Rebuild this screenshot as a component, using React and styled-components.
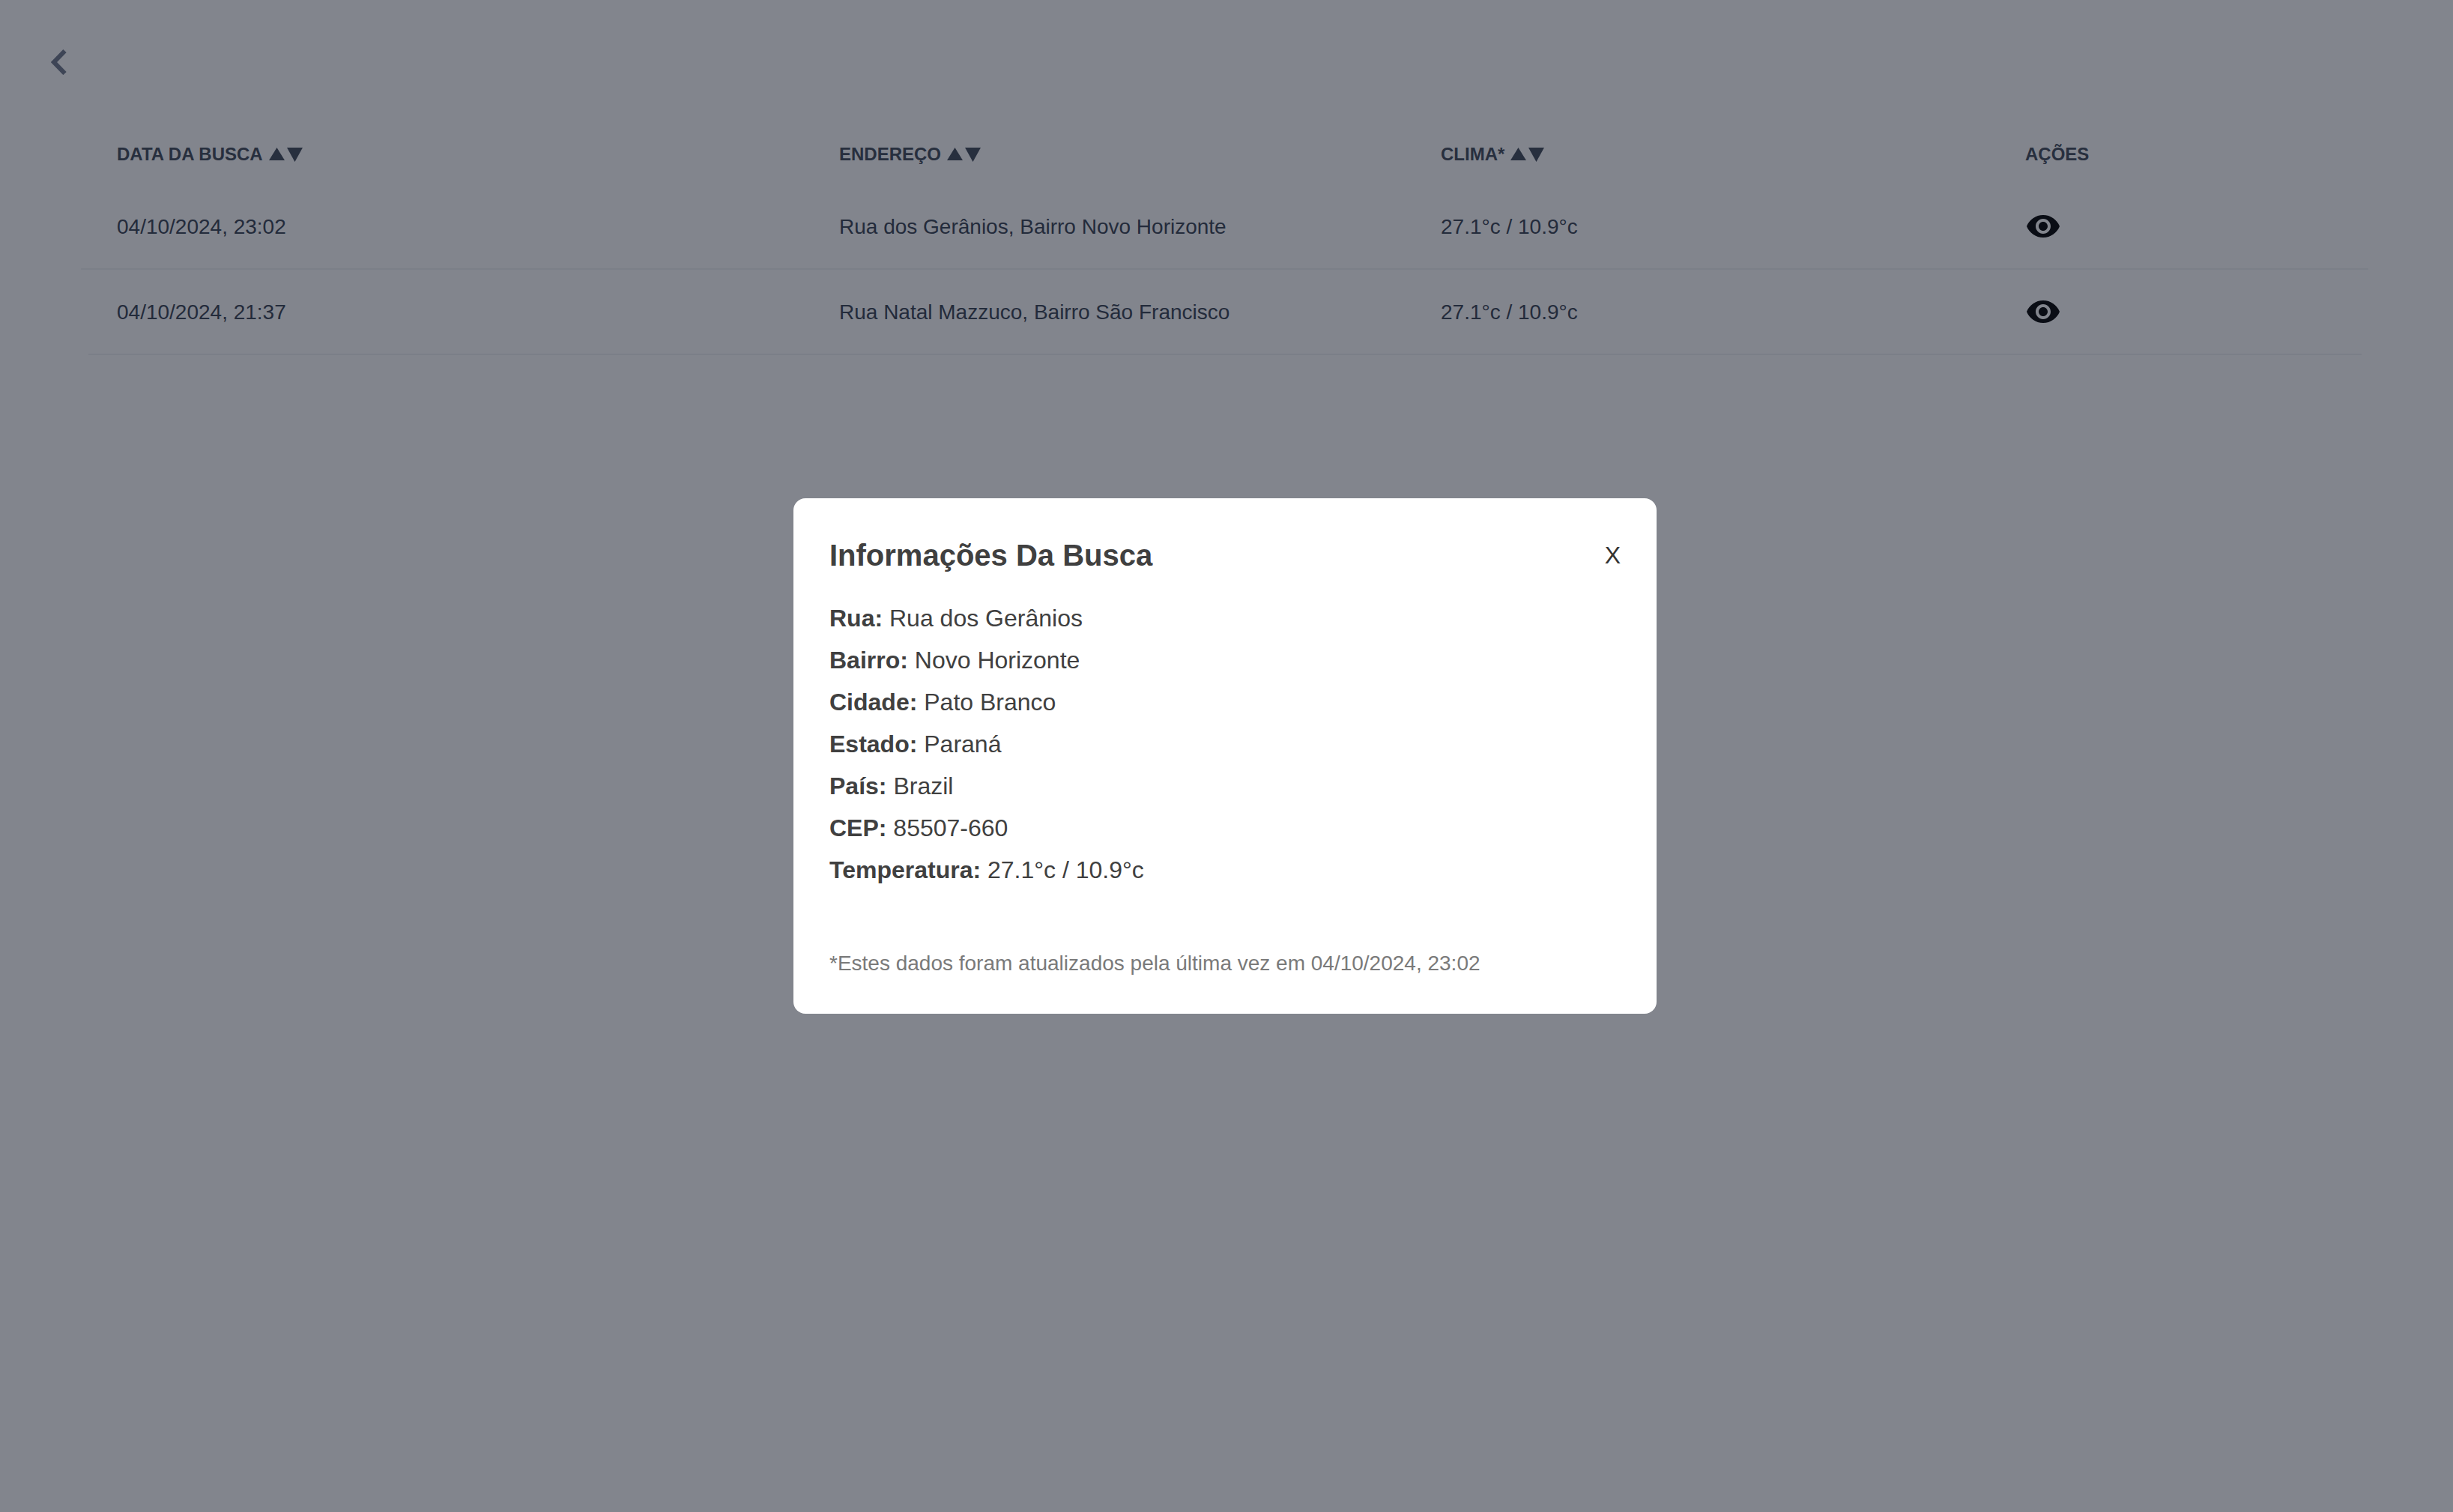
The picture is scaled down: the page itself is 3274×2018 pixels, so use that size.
import React from "react";
import styled, { createGlobalStyle } from "styled-components";
import { MdVisibility } from "react-icons/md";

const Global = createGlobalStyle`
  html, body { margin: 0; padding: 0; background: #fff; }
  body { font-family: "Liberation Sans", Arial, sans-serif; color: #404040; }
`;

const Page = styled.div`
  width: 100%;
  height: 2018px;
  overflow: hidden;
  box-sizing: border-box;
  padding: 66px 113px 0 68px;
`;

const BackButton = styled.button`
  display: block;
  width: 21px;
  height: 34px;
  padding: 0;
  border: 0;
  background: none;
  color: #6f788a;
`;

const Table = styled.div`
  margin: 64px 0 0 40px;
`;

const Row = styled.div`
  display: grid;
  grid-template-columns: 964px 803px 780px 1fr;
  align-items: center;
  box-sizing: border-box;
  padding: 2px 0 0 ${(p) => (p.$last ? 38 : 48)}px;
  margin-left: ${(p) => (p.$last ? 10 : 0)}px;
  margin-right: ${(p) => (p.$last ? 9 : 0)}px;
  height: 114px;
  border-bottom: 2px solid #f1f2f4;
  font-size: 28px;
  color: #374151;
`;

const HeadRow = styled.div`
  display: grid;
  grid-template-columns: 964px 803px 780px 1fr;
  align-items: center;
  box-sizing: border-box;
  padding: 2px 0 0 48px;
  height: 82px;
`;

const HeadCell = styled.div`
  display: flex;
  align-items: center;
  gap: 7px;
  font-size: 24px;
  font-weight: 700;
  color: #3f4858;
  text-transform: uppercase;
`;

const SortIcon = styled.svg`
  width: 46px;
  height: 20px;
  color: #3f4858;
`;

const EyeIcon = styled(MdVisibility)`
  display: block;
  margin-top: -2px;
  font-size: 48px;
  color: #000;
`;

const Overlay = styled.div`
  position: fixed;
  inset: 0;
  display: flex;
  align-items: center;
  justify-content: center;
  padding-right: 4px;
  background: rgba(18, 24, 40, 0.53);
`;

const Modal = styled.div`
  box-sizing: border-box;
  width: 1152px;
  height: 688px;
  padding: 48px;
  border-radius: 16px;
  background: #fff;
`;

const ModalHeader = styled.div`
  display: flex;
  align-items: center;
  justify-content: space-between;
  height: 56px;
  margin-bottom: 28px;
`;

const Title = styled.h2`
  margin: 0;
  font-size: 40px;
  font-weight: 700;
  color: #404040;
`;

const Close = styled.button`
  padding: 0;
  border: 0;
  background: none;
  font: 400 32px "Liberation Sans", Arial, sans-serif;
  color: #333;
`;

const Info = styled.p`
  margin: 0;
  font-size: 32px;
  line-height: 56px;
  color: #404040;
  strong { font-weight: 700; }
`;

const Note = styled.p`
  margin: 77px 0 0;
  font-size: 28px;
  line-height: 40px;
  color: #7a7a7a;
`;

const Sort = () => (
  <SortIcon viewBox="0 0 46 20" aria-hidden="true">
    <path d="M11.5 1 22 18H1z" fill="currentColor" />
    <path d="M25 1h21L35.5 20z" fill="currentColor" />
  </SortIcon>
);

const rows = [
  ["04/10/2024, 23:02", "Rua dos Gerânios, Bairro Novo Horizonte"],
  ["04/10/2024, 21:37", "Rua Natal Mazzuco, Bairro São Francisco"],
];

const info = [
  ["Rua:", "Rua dos Gerânios"],
  ["Bairro:", "Novo Horizonte"],
  ["Cidade:", "Pato Branco"],
  ["Estado:", "Paraná"],
  ["País:", "Brazil"],
  ["CEP:", "85507-660"],
  ["Temperatura:", "27.1°c / 10.9°c"],
];

export default function App() {
  return (
    <>
      <Global />
      <Page>
        <BackButton aria-label="Voltar">
          <svg width="21" height="34" viewBox="0 0 21 34" fill="none">
            <path d="M18.5 2 4 17l14.5 15" stroke="currentColor" strokeWidth="6" />
          </svg>
        </BackButton>
        <Table>
          <HeadRow>
            <HeadCell>Data da busca <Sort /></HeadCell>
            <HeadCell>Endereço <Sort /></HeadCell>
            <HeadCell>Clima* <Sort /></HeadCell>
            <HeadCell>Ações</HeadCell>
          </HeadRow>
          {rows.map(([date, addr], i) => (
            <Row key={date} $last={i === rows.length - 1}>
              <div>{date}</div>
              <div>{addr}</div>
              <div>27.1°c / 10.9°c</div>
              <div><EyeIcon /></div>
            </Row>
          ))}
        </Table>
      </Page>
      <Overlay>
        <Modal>
          <ModalHeader>
            <Title>Informações Da Busca</Title>
            <Close>X</Close>
          </ModalHeader>
          {info.map(([k, v]) => (
            <Info key={k}><strong>{k}</strong> {v}</Info>
          ))}
          <Note>*Estes dados foram atualizados pela última vez em 04/10/2024, 23:02</Note>
        </Modal>
      </Overlay>
    </>
  );
}
